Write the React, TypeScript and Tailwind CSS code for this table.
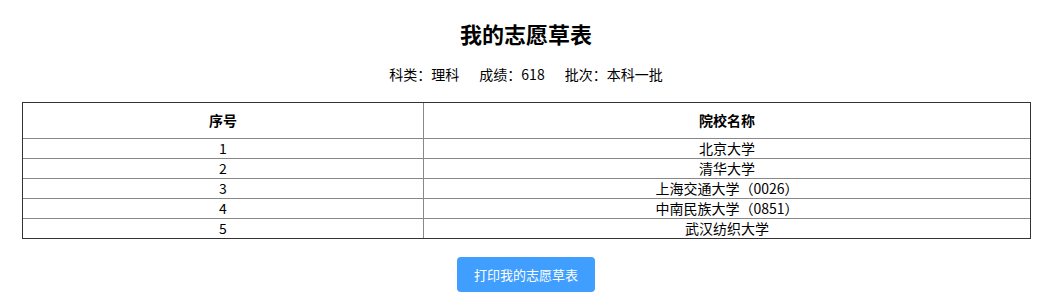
const INFO = [
  { label: "科类", value: "理科" },
  { label: "成绩", value: "618" },
  { label: "批次", value: "本科一批" },
];

// 志愿列表 — 序号 + 院校名称
const SCHOOLS = [
  "北京大学",
  "清华大学",
  "上海交通大学（0026）",
  "中南民族大学（0851）",
  "武汉纺织大学",
];

export default function App() {
  return (
    <div
      className="min-h-[305px] bg-white pr-[3px] pt-[18px] text-black"
      style={{ fontFamily: '"Noto Sans CJK SC", "Noto Sans", sans-serif' }}
    >
      <h1 className="text-center text-[22px] font-bold leading-[30px]">我的志愿草表</h1>

      <div className="mt-[16px] flex justify-center gap-[20px] text-[14px] leading-[20px]">
        {INFO.map((item) => (
          <span key={item.label}>
            {item.label}：{item.value}
          </span>
        ))}
      </div>

      {/* 表格 */}
      <div className="ml-[22px] mt-[18px] w-[1009px] border border-[#333] text-[14px]">
        <div className="flex h-[35px] items-center font-bold">
          <div className="flex h-full w-[401px] items-center justify-center border-r border-[#888]">
            序号
          </div>
          <div className="flex-1 text-center">院校名称</div>
        </div>
        {SCHOOLS.map((name, i) => (
          <div key={name} className="flex h-[20px] border-t border-[#888] leading-[19px]">
            <div className="w-[401px] border-r border-[#888] text-center">{i + 1}</div>
            <div className="flex-1 text-center">{name}</div>
          </div>
        ))}
      </div>

      <div className="mt-[18px] flex justify-center">
        <button className="h-[35px] w-[138px] rounded-[4px] bg-[#409eff] text-[13px] text-white">
          打印我的志愿草表
        </button>
      </div>
    </div>
  );
}
